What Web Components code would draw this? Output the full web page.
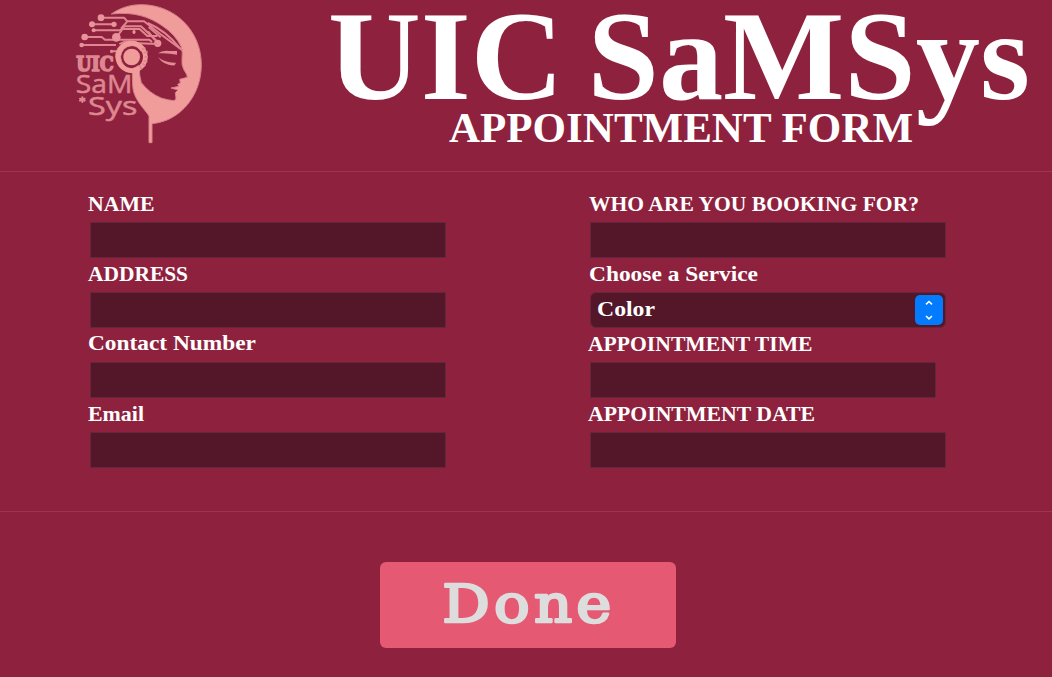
<!DOCTYPE html>
<html lang="en">
<head>
<meta charset="utf-8">
<title>UIC SaMSys – Appointment Form</title>
<style>
html,body{margin:0;height:100%;background:#8e223e}
body{overflow:hidden;font-family:"Liberation Serif",serif;color:#fff}
</style>
</head>
<body>
<appointment-page></appointment-page>
<script>
// One line of text set to an exact measure.
class FitText extends HTMLElement{
  connectedCallback(){
    const a=n=>this.getAttribute(n);
    const r=this.attachShadow({mode:'open'});
    r.innerHTML=`<style>
:host{display:block}
svg{display:block;overflow:visible;width:100%;height:${a('height')}px}
text{fill:currentColor;font-family:inherit;font-weight:inherit;font-size:${a('size')}px;word-spacing:${a('words')||0}px;stroke:currentColor;stroke-width:${a('stroke')||0};stroke-linejoin:round}
</style><svg><text transform="scale(${a('stretch')||1} 1)" x="${a('x')||0}" y="${a('base')}" textLength="${a('measure')}" lengthAdjust="${a('adjust')||'spacingAndGlyphs'}"></text></svg>`;
    r.querySelector('text').textContent=a('text');
  }
}
customElements.define('fit-text',FitText);

class BrandLogo extends HTMLElement{
  connectedCallback(){
    this.attachShadow({mode:'open'}).innerHTML=`<style>
:host{display:block;width:160px;height:150px;flex:none;font-weight:400}
svg{display:block;width:100%;height:100%}
.l{fill:none;stroke:#df8690;stroke-width:6;stroke-linejoin:round}
.d{fill:#e8929a}
.h{fill:none;stroke:#df8690;stroke-width:6;stroke-linejoin:round;stroke-linecap:round}
text{fill:#de8791}
</style>
<svg viewBox="0 0 480 450">
<path fill="#f09c9a" stroke="#d9808b" stroke-width="3" d="M154 42C183 22 213 14 244 14C345 14 424 93 424 194C424 286 362 363 276 371V428H267V348C253 326 229 306 220 272Q217 257 217 218Q188 211 174 191Q160 166 174 144Q188 124 216 124Q242 125 254 145L243 154Q231 136 215 137Q186 140 182 170Q184 203 216 207L237 196Q238 230 244 248Q269 280 303 294Q325 301 342 302Q351 298 347 289L346 278L354 270L333 264L357 259L353 253L361 249L359 238L382 232Q382 224 372 210Q364 196 366 178Q369 158 363 139Q345 103 309 79C270 51 222 34 154 42Z"/>
<path class="l" d="M123 53H192L202 64H252L301 102L368 151M96 73H162M183 86L202 64M101 91H181L194 79H243L296 128M74 111H125L135 119H268L276 126M65 135H168M169 112L188 87H239L262 108H292M222 91V101"/>
<path class="l" d="M263 69Q317 91 360 145M266 81L302 112M264 94L285 120"/>
<g class="d"><circle cx="123" cy="53" r="10"/><circle cx="96" cy="73" r="9"/><circle cx="162" cy="73" r="8"/><circle cx="101" cy="91" r="6"/><circle cx="74" cy="111" r="10"/><circle cx="169" cy="112" r="13"/><circle cx="65" cy="135" r="7"/><circle cx="293" cy="130" r="11"/><circle cx="155" cy="154" r="5"/><circle cx="222" cy="96" r="5"/></g>
<path class="l" d="M178 132Q205 117 236 130L292 132M150 154H171"/>
<circle cx="215" cy="171" r="41" fill="none" stroke="#f09c9a" stroke-width="14"/>
<circle cx="215" cy="171" r="28" fill="none" stroke="#8e223e" stroke-width="6"/>
<circle cx="215" cy="171" r="25" fill="#f09c9a"/>
<path class="l" d="M246 149L256 143M251 158L263 155M254 171H264M251 182L262 186M247 190L256 198M239 196L244 207"/>
<path fill="#e28b92" d="M294 160Q307 150 327 153H351V164Q322 158 294 160ZM294 172Q319 190 348 188L344 196Q314 199 294 172Z"/>
<text x="49" y="213" font-family="DejaVu Serif" font-weight="700" font-size="61" textLength="112" lengthAdjust="spacingAndGlyphs" stroke="#de8791" stroke-width="5">UIC</text>
<text x="47" y="278" font-family="Open Sans" font-size="76" textLength="170" lengthAdjust="spacingAndGlyphs" stroke="#de8791" stroke-width="1.5">SaM</text>
<text x="84" y="346" font-family="Open Sans" font-size="76" textLength="148" lengthAdjust="spacingAndGlyphs" stroke="#de8791" stroke-width="1.5">Sys</text>
<path class="h" d="M67 292V306M60 296L74 302M74 296L60 302"/>
</svg>`;
  }
}
customElements.define('brand-logo',BrandLogo);

class PageHeader extends HTMLElement{
  connectedCallback(){
    this.attachShadow({mode:'open'}).innerHTML=`<style>
:host{display:flex;box-sizing:border-box;height:172px;padding-left:60px;border-bottom:1px solid #9b3550;font-weight:700}
.t{flex:1;padding-left:110px}
.s{padding-left:120px}
</style>
<brand-logo></brand-logo>
<div class="t"><fit-text text="UIC SaMSys" size="126" height="108" base="98.5" x="-2" words="-8" measure="702"></fit-text>
<div class="s"><fit-text text="APPOINTMENT FORM" size="43" height="50" base="34" x="-1" measure="464"></fit-text></div></div>`;
  }
}
customElements.define('page-header',PageHeader);

// A labelled box; its slot holds the current value.
class FormField extends HTMLElement{
  connectedCallback(){
    const a=n=>this.getAttribute(n);
    this.attachShadow({mode:'open'}).innerHTML=`<style>
:host{display:block;height:70px;font-weight:700}
.b{box-sizing:border-box;height:36px;width:${a('box')||356}px;margin-left:2px;border:1px solid #66273d;background:#541629;display:flex;align-items:center;${this.hasAttribute('rounded')?'border-radius:6px;':''}}
</style>
<fit-text text="${a('label')}" size="${a('size')||22}" height="34" base="${a('base')||23}" x="${a('x')||0}" measure="${a('measure')}"></fit-text>
<div class="b"><slot></slot></div>`;
  }
}
customElements.define('form-field',FormField);

class SelectValue extends HTMLElement{
  connectedCallback(){
    this.attachShadow({mode:'open'}).innerHTML=`<style>
:host{display:flex;width:100%;align-items:center;padding:0 2px 0 6px}
fit-text{flex:1}
svg{display:block;width:28px;height:30px;border-radius:5px;background:#027bff}
path{fill:none;stroke:#fff;stroke-width:1.6}
</style>
<fit-text text="${this.getAttribute('text')}" size="22" height="34" base="23" measure="58"></fit-text>
<svg viewBox="0 0 28 30"><path d="M11 9.3L14 6.5L17 9.3M11 21L14 23.8L17 21"/></svg>`;
  }
}
customElements.define('select-value',SelectValue);

class DoneButton extends HTMLElement{
  connectedCallback(){
    this.attachShadow({mode:'open'}).innerHTML=`<style>
:host{display:block}
button{display:block;box-sizing:border-box;width:296px;height:86px;border:0;border-radius:6px;padding:0 0 0 64px;background:#e55973;color:#ddd;font-family:"DejaVu Serif",serif;font-weight:400}
</style>
<button type="button"><fit-text text="Done" size="53" height="86" base="60.5" x="-1.5" measure="151" stretch="1.12" adjust="spacing" stroke="2.6"></fit-text></button>`;
  }
}
customElements.define('done-button',DoneButton);

class AppointmentPage extends HTMLElement{
  connectedCallback(){
    this.attachShadow({mode:'open'}).innerHTML=`<style>
:host{display:block;height:677px;background:#8e223e}
main{box-sizing:border-box;height:340px;padding:16px 0 0 88px;display:grid;grid-template-columns:500px 1fr;grid-auto-rows:70px;border-bottom:1px solid #9b3550}
footer{padding:50px 0 0 380px}
</style>
<page-header></page-header>
<main>
<form-field label="NAME" measure="66.5"></form-field>
<form-field label="WHO ARE YOU BOOKING FOR?" measure="330" x="1"></form-field>
<form-field label="ADDRESS" measure="100"></form-field>
<form-field label="Choose a Service" measure="169" x="1" rounded><select-value text="Color"></select-value></form-field>
<form-field label="Contact Number" measure="168" base="22"></form-field>
<form-field label="APPOINTMENT TIME" measure="224.5" box="346"></form-field>
<form-field label="Email" measure="56"></form-field>
<form-field label="APPOINTMENT DATE" measure="227"></form-field>
</main>
<footer><done-button></done-button></footer>`;
  }
}
customElements.define('appointment-page',AppointmentPage);
</script>
</body>
</html>
